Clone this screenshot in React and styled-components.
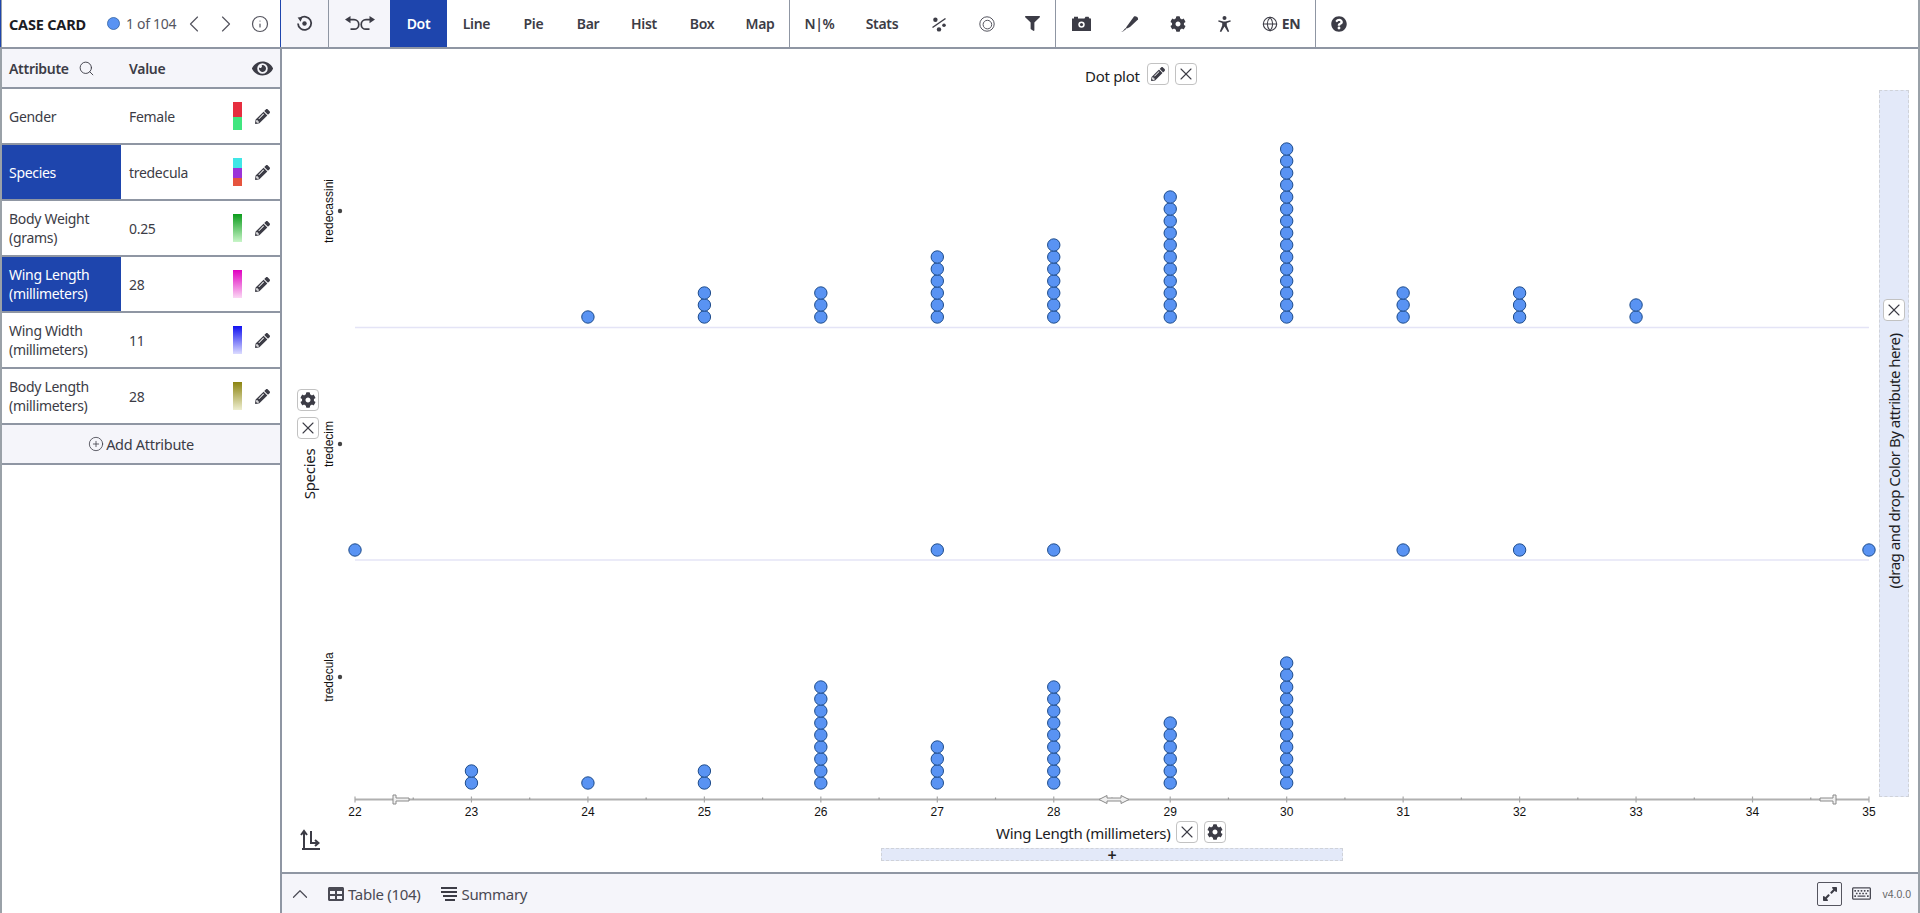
import React from "react"
import styled, { createGlobalStyle } from "styled-components"
import { ChevronLeft, ChevronRight, ChevronUp, Search, Info, CirclePlus, X, Globe } from "lucide-react"
import { FaPencilAlt, FaCog, FaEye, FaFilter, FaQuestionCircle, FaExpandAlt, FaRegKeyboard, FaTable } from "react-icons/fa"

const GlobalStyle = createGlobalStyle`
    html, body { margin: 0; padding: 0; background: #fff; }
    body { font-family: "Noto Sans", sans-serif; color: #3c3c46; overflow: hidden; letter-spacing: -0.3px; }
    * { box-sizing: border-box; }
`

const BLUE = "#1e45ad"
const LINE = "#8f96a3"
const PALE = "#f5f5fa"

const Page = styled.div`
    width: 1920px;
    height: 913px;
    display: flex;
    flex-direction: column;
    border-left: 2px solid #9aa1a8;
    border-right: 2px solid #9aa1a8;
`

const Toolbar = styled.div`
    height: 49px;
    flex: none;
    display: flex;
    border-bottom: 2px solid ${LINE};
    margin-left: -2px;
`

const CaseHeader = styled.div`
    width: 281px;
    display: flex;
    align-items: center;
    padding-left: 8px;
    border-left: 1px solid ${BLUE};
    border-right: 1px solid ${BLUE};
    color: #55555f;
    font-size: 14px;
`

const CaseTitle = styled.span`
    font-weight: 700;
    font-size: 14.5px;
    color: #1c1c24;
    width: 98px;
    white-space: nowrap;
    letter-spacing: -0.2px;
`

const Counter = styled.span`
    margin-left: 6px;
    width: 51px;
    white-space: nowrap;
`

const NavIcon = styled.span`
    display: flex;
    margin-left: ${p => p.$ml}px;
`

const ToolButton = styled.div`
    width: ${p => p.$w}px;
    flex: none;
    display: flex;
    align-items: center;
    justify-content: center;
    gap: 4px;
    font-size: 14px;
    font-weight: 600;
    white-space: nowrap;
    color: ${p => (p.$active ? "#fff" : "#3c3c46")};
    background: ${p => (p.$active ? BLUE : p.$pale ? PALE : "#fff")};
    border-right: ${p => (p.$sep ? `1px solid ${LINE}` : "none")};
`

const Main = styled.div`
    flex: 1;
    display: flex;
    min-height: 0;
`

const LeftPanel = styled.div`
    width: 280px;
    flex: none;
    border-right: 2px solid ${LINE};
`

const AttrHeader = styled.div`
    height: 40px;
    display: flex;
    align-items: center;
    background: ${PALE};
    border-bottom: 2px solid ${LINE};
    font-weight: 600;
    font-size: 14px;
    padding-right: 7px;
`

const HeadLabel = styled.div`
    width: ${p => p.$w}px;
    flex: none;
    display: flex;
    align-items: center;
    gap: 9px;
    padding-left: ${p => p.$pad}px;
`

const Row = styled.div`
    height: 56px;
    display: flex;
    border-bottom: 2px solid ${LINE};
    font-size: 14px;
    line-height: 19px;
`

const AttrName = styled.div`
    width: 119px;
    flex: none;
    display: flex;
    align-items: center;
    padding-left: 7px;
    background: ${p => (p.$on ? BLUE : "#fff")};
    color: ${p => (p.$on ? "#fff" : "#3c3c46")};
`

const AttrValue = styled.div`
    flex: 1;
    display: flex;
    align-items: center;
    padding-left: 8px;
`

const Swatch = styled.div`
    width: 9px;
    height: 28px;
    margin: auto 0;
    background: ${p => p.$fill};
`

const EditCell = styled.div`
    width: 38px;
    flex: none;
    display: flex;
    align-items: center;
    justify-content: center;
    padding-left: 2px;
    color: #3c3c46;
    font-size: 15px;
`

const AddRow = styled.div`
    height: 40px;
    display: flex;
    align-items: center;
    justify-content: center;
    gap: 2px;
    background: ${PALE};
    border-bottom: 2px solid ${LINE};
    font-size: 14.5px;
`

const RightPanel = styled.div`
    flex: 1;
    display: flex;
    flex-direction: column;
    min-width: 0;
`

const Canvas = styled.div`
    position: relative;
    flex: 1;
    min-height: 0;
`

const Plot = styled.svg`
    position: absolute;
    left: 0;
    top: 0;
`

const SquareButton = styled.div`
    position: absolute;
    left: ${p => p.$x}px;
    top: ${p => p.$y}px;
    width: 22px;
    height: 22px;
    display: flex;
    align-items: center;
    justify-content: center;
    background: #fff;
    border: 1.5px solid #c2c2c2;
    border-radius: 4px;
    color: #3c3c46;
    font-size: 13px;
`

const Floating = styled.div`
    position: absolute;
    left: ${p => p.$x}px;
    top: ${p => p.$y}px;
    white-space: nowrap;
    font-size: 15px;
    line-height: 20px;
    color: #1c1c24;
    letter-spacing: ${p => p.$tight || "-0.3px"};
`

const Turned = styled(Floating)`
    transform: translate(-50%, -50%) rotate(-90deg);
`

const DropZone = styled.div`
    position: absolute;
    left: ${p => p.$x}px;
    top: ${p => p.$y}px;
    width: ${p => p.$w}px;
    height: ${p => p.$h}px;
    display: flex;
    align-items: center;
    justify-content: center;
    background: #e3e9f9;
    border: 1.5px dashed #cfd2d9;
    font-size: 16px;
    font-weight: 600;
    line-height: 1;
    color: #222;
`

const AxisCorner = styled.div`
    position: absolute;
    left: 17px;
    top: 780px;
    display: flex;
`

const Footer = styled.div`
    height: 41px;
    flex: none;
    display: flex;
    align-items: center;
    background: ${PALE};
    border-top: 2px solid ${LINE};
    font-size: 15px;
    color: #4a4a54;
`

const FooterItem = styled.div`
    display: flex;
    align-items: center;
    gap: 4px;
    margin-left: ${p => p.$ml}px;
`

const ExpandButton = styled.div`
    margin-left: auto;
    width: 25px;
    height: 24px;
    display: flex;
    align-items: center;
    justify-content: center;
    border: 1px solid #55555f;
    border-radius: 2px;
    color: #3c3c46;
    font-size: 16px;
`

const Version = styled.span`
    font-family: "Liberation Sans", sans-serif;
    font-size: 10.5px;
    letter-spacing: 0;
    color: #666;
    margin: 0 7px 0 11px;
`

const EnLabel = styled.span`
    font-weight: 700;
`

// page coordinates of the plot, measured from the canvas corner at (282, 49)
const OX = 282
const OY = 49
const xFor = v => 355 + (v - 22) * 116.46 - OX

const groups = [
    { name: "tredecassini", base: 317, line: 327.5, tickY: 211, counts: { 24: 1, 25: 3, 26: 3, 27: 6, 28: 7, 29: 11, 30: 15, 31: 3, 32: 3, 33: 2 } },
    { name: "tredecim", base: 550, line: 560, tickY: 444, counts: { 22: 1, 27: 1, 28: 1, 31: 1, 32: 1, 35: 1 } },
    { name: "tredecula", base: 783, tickY: 677, counts: { 23: 2, 24: 1, 25: 2, 26: 9, 27: 4, 28: 9, 29: 6, 30: 11 } },
]

const attrs = [
    { name: "Gender", value: "Female", fill: "linear-gradient(#e62e3f 0 53%, #40e67f 53%)" },
    { name: "Species", value: "tredecula", on: true, fill: "linear-gradient(#40e6e6 0 36%, #9b34d8 36% 70%, #e6543e 70%)" },
    { name: "Body Weight (grams)", value: "0.25", fill: "linear-gradient(#0c9c1c, #c8f5c8)" },
    { name: "Wing Length (millimeters)", value: "28", on: true, fill: "linear-gradient(#e000c0, #fbd8f4)" },
    { name: "Wing Width (millimeters)", value: "11", fill: "linear-gradient(#1010f0, #dcdcff)" },
    { name: "Body Length (millimeters)", value: "28", fill: "linear-gradient(#8c8410, #eeeed0)" },
]

const ResetIcon = () => (
    <svg width="17" height="17" viewBox="0 0 17 17" fill="none" stroke="#3c3c46" strokeWidth="1.8">
        <path d="M4.2 3.4A6.6 6.6 0 1 1 2 8.5" />
        <path d="M1.6 2.6 6.6 2 4.6 6.8z" fill="#3c3c46" stroke="none" />
        <circle cx="8.5" cy="8.5" r="2.2" fill="#3c3c46" stroke="none" />
    </svg>
)

const UndoRedoIcon = () => (
    <svg width="30" height="15" viewBox="0 0 30 15" fill="none" stroke="#3c3c46" strokeWidth="1.7">
        <path d="M4 3.6h5a4.8 4.8 0 0 1 0 9.6H5.5" />
        <path d="M5.5 0 0 3.6l5.5 3.6z" fill="#3c3c46" stroke="none" />
        <path d="M26 3.6h-5a4.8 4.8 0 0 0 0 9.6h3.5" />
        <path d="M24.5 0 30 3.6l-5.5 3.6z" fill="#3c3c46" stroke="none" />
    </svg>
)

const PercentDots = () => (
    <svg width="16" height="16" viewBox="0 0 16 16" fill="#3c3c46">
        <path d="M1.5 11.5 14.5 2.5" stroke="#3c3c46" strokeWidth="1.5" />
        <circle cx="4.4" cy="3.8" r="2.2" />
        <circle cx="8" cy="13.4" r="2.2" />
        <circle cx="13" cy="9.2" r="1.8" />
    </svg>
)

const RingIcon = () => (
    <svg width="16" height="16" viewBox="0 0 16 16" fill="none" stroke="#55555f" strokeWidth="1">
        <circle cx="8" cy="8" r="7.2" />
        <circle cx="8.4" cy="8.6" r="4.3" />
    </svg>
)

const CameraIcon = () => (
    <svg width="19" height="15" viewBox="0 0 19 15">
        <path d="M0 2.5h2V.8h4V2.5h6.5L13.5.8h3l1 1.7H19V15H0z" fill="#3c3c46" />
        <circle cx="9.5" cy="8.6" r="3.2" fill="#fff" />
        <circle cx="9.5" cy="8.6" r="1.6" fill="#3c3c46" />
    </svg>
)

const PenIcon = () => (
    <svg width="18" height="16" viewBox="0 0 18 16" fill="#3c3c46">
        <path d="M13 .5c2-.8 4.6 1 4 3L9 11l-3.5 1.8L5 11.5z" />
        <path d="M0 15.5h2l3.2-2.6-.8-1-2.4 3z" />
    </svg>
)

const PersonIcon = () => (
    <svg width="13" height="16" viewBox="0 0 13 16" fill="#3c3c46">
        <circle cx="6.5" cy="2" r="2" />
        <path d="M.6 4.2 5.4 5.4h2.2l4.8-1.2.4 1.4-4 1.4v2.6l2.4 6-1.4.4-3.3-5.6-3.3 5.6-1.4-.4 2.4-6V7L.2 5.6z" />
    </svg>
)

const SummaryIcon = () => (
    <svg width="16" height="16" viewBox="0 0 16 16" stroke="#3c3c46" strokeWidth="2">
        <path d="M0 2h16M0 6h16M2 10h14M4 14h10" />
    </svg>
)

const AxisSwap = () => (
    <svg width="21" height="22" viewBox="0 0 21 22" fill="none" stroke="#3c3c46" strokeWidth="2">
        <path d="M3 20h18M5 20V3M2 6l3-4 3 4M12 2v12h7M16 11l3.5 3-3.5 3" />
    </svg>
)

const Chart = () => {
    const ticks = []
    for (let v = 22; v <= 35; v++) ticks.push(v)
    const axisY = 799.5 - OY
    return (
        <Plot width="1636" height="822" viewBox="0 0 1636 822">
            {groups.map(g => (
                <g key={g.name}>
                    {g.line && <line x1={xFor(22)} x2={xFor(35)} y1={g.line - OY} y2={g.line - OY} stroke="#e4e4f6" strokeWidth="1.5" />}
                    <circle cx={340 - OX} cy={g.tickY - OY} r="2.2" fill="#444" />
                    <text
                        transform={`translate(${332.5 - OX} ${g.tickY - OY}) rotate(-90)`}
                        textAnchor="middle"
                        fontFamily="Liberation Sans"
                        fontSize="12"
                        letterSpacing="0"
                        fill="#111"
                    >
                        {g.name}
                    </text>
                    {Object.entries(g.counts).map(([v, n]) =>
                        Array.from({ length: n }, (_, i) => (
                            <circle
                                key={`${v}-${i}`}
                                cx={xFor(Number(v))}
                                cy={g.base - OY - i * 12}
                                r="6.2"
                                fill="#5993f3"
                                stroke="#1f4d8c"
                                strokeWidth="1"
                            />
                        ))
                    )}
                </g>
            ))}
            <line x1={xFor(22)} x2={xFor(35)} y1={axisY} y2={axisY} stroke="#b0b0b0" strokeWidth="2" />
            {ticks.map(v => (
                <g key={v}>
                    <line x1={xFor(v)} x2={xFor(v)} y1={axisY - 3} y2={axisY + 3} stroke="#a8a8a8" strokeWidth="1.2" />
                    <text x={xFor(v)} y={axisY + 16} textAnchor="middle" fontFamily="Liberation Sans" fontSize="12" letterSpacing="0" fill="#111">
                        {v}
                    </text>
                    {v < 35 && <line x1={xFor(v + 0.5)} x2={xFor(v + 0.5)} y1={axisY - 2} y2={axisY} stroke="#999" strokeWidth="1.2" />}
                </g>
            ))}
            <path d={`M${393 - OX} ${axisY - 4.5}h3v3h13v3h-13v3h-3z`} fill="#f0f0f0" stroke="#8a8a8a" />
            <path d={`M${1836 - OX} ${axisY - 4.5}h-3v3h-13v3h13v3h3z`} fill="#f0f0f0" stroke="#8a8a8a" />
            <path d={`M${1099 - OX} ${axisY}l8-4v2.5h14v-2.5l8 4-8 4v-2.5h-14v2.5z`} fill="#efefef" stroke="#8a8a8a" />
        </Plot>
    )
}

const App = () => (
    <Page>
        <GlobalStyle />
        <Toolbar>
            <CaseHeader>
                <CaseTitle>CASE CARD</CaseTitle>
                <svg width="13" height="13" viewBox="0 0 13 13">
                    <circle cx="6.5" cy="6.5" r="6" fill="#5993f3" stroke="#2f5f9f" strokeWidth="0.8" />
                </svg>
                <Counter>1 of 104</Counter>
                <NavIcon $ml={3}><ChevronLeft size={28} strokeWidth={1} /></NavIcon>
                <NavIcon $ml={4}><ChevronRight size={28} strokeWidth={1} /></NavIcon>
                <NavIcon $ml={11}><Info size={18} strokeWidth={1.6} /></NavIcon>
            </CaseHeader>
            <ToolButton $w={48} $pale $sep><ResetIcon /></ToolButton>
            <ToolButton $w={61} $pale><UndoRedoIcon /></ToolButton>
            <ToolButton $w={57} $active>Dot</ToolButton>
            <ToolButton $w={59}>Line</ToolButton>
            <ToolButton $w={55}>Pie</ToolButton>
            <ToolButton $w={54}>Bar</ToolButton>
            <ToolButton $w={58}>Hist</ToolButton>
            <ToolButton $w={58}>Box</ToolButton>
            <ToolButton $w={59} $sep>Map</ToolButton>
            <ToolButton $w={59}>N|%</ToolButton>
            <ToolButton $w={66}>Stats</ToolButton>
            <ToolButton $w={48}><PercentDots /></ToolButton>
            <ToolButton $w={47}><RingIcon /></ToolButton>
            <ToolButton $w={46} $sep><FaFilter size={15} /></ToolButton>
            <ToolButton $w={50}><CameraIcon /></ToolButton>
            <ToolButton $w={48}><PenIcon /></ToolButton>
            <ToolButton $w={47}><FaCog size={16} /></ToolButton>
            <ToolButton $w={46}><PersonIcon /></ToolButton>
            <ToolButton $w={69} $sep><Globe size={16} strokeWidth={1.6} /><EnLabel>EN</EnLabel></ToolButton>
            <ToolButton $w={46}><FaQuestionCircle size={16} /></ToolButton>
        </Toolbar>
        <Main>
            <LeftPanel>
                <AttrHeader>
                    <HeadLabel $w={119} $pad={7}>Attribute <Search size={17} strokeWidth={1.3} /></HeadLabel>
                    <HeadLabel $w={131} $pad={8}>Value</HeadLabel>
                    <FaEye size={21} />
                </AttrHeader>
                {attrs.map(a => (
                    <Row key={a.name}>
                        <AttrName $on={a.on}>{a.name}</AttrName>
                        <AttrValue>{a.value}</AttrValue>
                        <Swatch $fill={a.fill} />
                        <EditCell><FaPencilAlt /></EditCell>
                    </Row>
                ))}
                <AddRow><CirclePlus size={16} strokeWidth={1.2} />Add Attribute</AddRow>
            </LeftPanel>
            <RightPanel>
                <Canvas>
                    <Chart />
                    <Floating $x={803} $y={17}>Dot plot</Floating>
                    <SquareButton $x={865} $y={14}><FaPencilAlt size={14} /></SquareButton>
                    <SquareButton $x={893} $y={14}><X size={22} strokeWidth={1.3} /></SquareButton>
                    <SquareButton $x={15} $y={340}><FaCog size={16} /></SquareButton>
                    <SquareButton $x={15} $y={368}><X size={22} strokeWidth={1.3} /></SquareButton>
                    <Turned $x={27} $y={424.5}>Species</Turned>
                    <Floating $x={714} $y={774}>Wing Length (millimeters)</Floating>
                    <SquareButton $x={894} $y={772}><X size={22} strokeWidth={1.3} /></SquareButton>
                    <SquareButton $x={922} $y={772}><FaCog size={16} /></SquareButton>
                    <DropZone $x={599} $y={799} $w={462} $h={13}>+</DropZone>
                    <DropZone $x={1597} $y={41} $w={30} $h={707} />
                    <Turned $x={1612} $y={412} $tight="-0.5px">(drag and drop Color By attribute here)</Turned>
                    <SquareButton $x={1601} $y={250}><X size={22} strokeWidth={1.3} /></SquareButton>
                    <AxisCorner><AxisSwap /></AxisCorner>
                </Canvas>
                <Footer>
                    <NavIcon $ml={5}><ChevronUp size={26} strokeWidth={1.1} /></NavIcon>
                    <FooterItem $ml={15}><FaTable size={16} />Table (104)</FooterItem>
                    <FooterItem $ml={21}><SummaryIcon />Summary</FooterItem>
                    <ExpandButton><FaExpandAlt /></ExpandButton>
                    <NavIcon $ml={10}><FaRegKeyboard size={19} /></NavIcon>
                    <Version>v4.0.0</Version>
                </Footer>
            </RightPanel>
        </Main>
    </Page>
)

export default App
